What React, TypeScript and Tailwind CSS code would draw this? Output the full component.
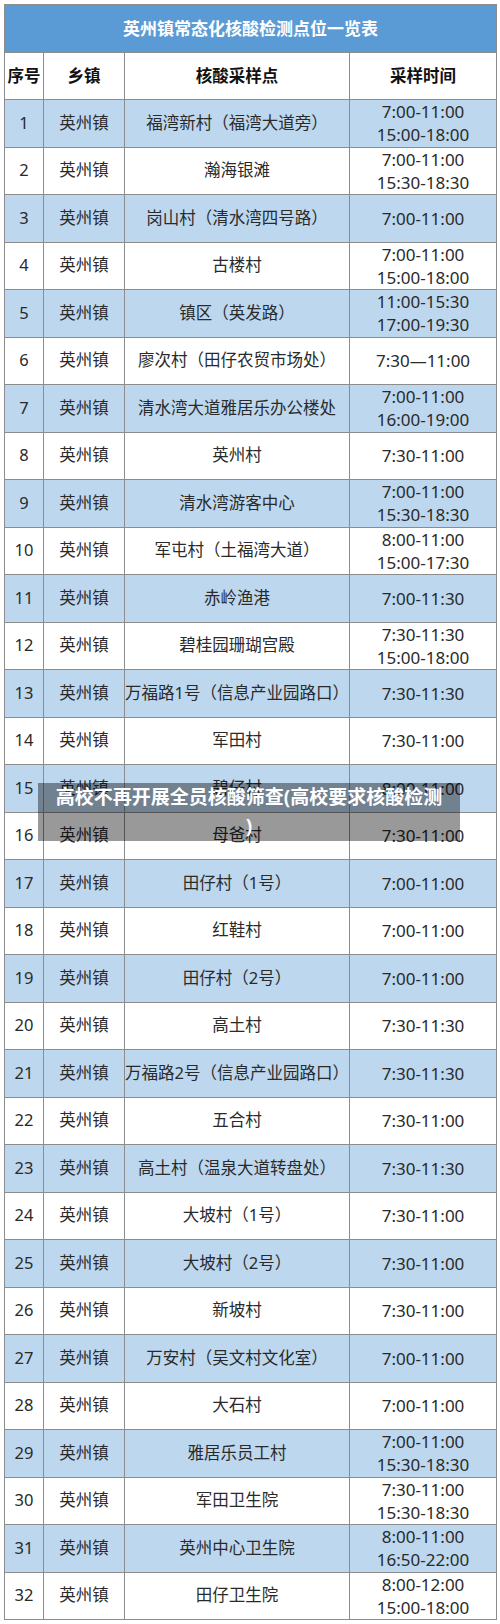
const rows: [string, string[]][] = [
  ['福湾新村（福湾大道旁）', ['7:00-11:00', '15:00-18:00']],
  ['瀚海银滩', ['7:00-11:00', '15:30-18:30']],
  ['岗山村（清水湾四号路）', ['7:00-11:00']],
  ['古楼村', ['7:00-11:00', '15:00-18:00']],
  ['镇区（英发路）', ['11:00-15:30', '17:00-19:30']],
  ['廖次村（田仔农贸市场处）', ['7:30—11:00']],
  ['清水湾大道雅居乐办公楼处', ['7:00-11:00', '16:00-19:00']],
  ['英州村', ['7:30-11:00']],
  ['清水湾游客中心', ['7:00-11:00', '15:30-18:30']],
  ['军屯村（土福湾大道）', ['8:00-11:00', '15:00-17:30']],
  ['赤岭渔港', ['7:00-11:30']],
  ['碧桂园珊瑚宫殿', ['7:30-11:30', '15:00-18:00']],
  ['万福路1号（信息产业园路口）', ['7:30-11:30']],
  ['军田村', ['7:30-11:00']],
  ['碧仔村', ['8:00-11:00']],
  ['母爸村', ['7:30-11:00']],
  ['田仔村（1号）', ['7:00-11:00']],
  ['红鞋村', ['7:00-11:00']],
  ['田仔村（2号）', ['7:00-11:00']],
  ['高土村', ['7:30-11:30']],
  ['万福路2号（信息产业园路口）', ['7:30-11:30']],
  ['五合村', ['7:30-11:00']],
  ['高土村（温泉大道转盘处）', ['7:30-11:30']],
  ['大坡村（1号）', ['7:30-11:00']],
  ['大坡村（2号）', ['7:30-11:00']],
  ['新坡村', ['7:30-11:00']],
  ['万安村（吴文村文化室）', ['7:00-11:00']],
  ['大石村', ['7:00-11:00']],
  ['雅居乐员工村', ['7:00-11:00', '15:30-18:30']],
  ['军田卫生院', ['7:30-11:00', '15:30-18:30']],
  ['英州中心卫生院', ['8:00-11:00', '16:50-22:00']],
  ['田仔卫生院', ['8:00-12:00', '15:00-18:00']],
]

export default function App() {
  return (
    <div
      className="relative w-[500px] h-[1624px] bg-white pt-[4px] pl-[4px]"
      style={{ fontFamily: '"Noto Sans", "Noto Sans CJK SC", sans-serif' }}
    >
      <table className="w-[492px] table-fixed border-collapse text-center text-[#2a2a2a]">
        <colgroup>
          <col className="w-[39px]" />
          <col className="w-[81px]" />
          <col className="w-[225px]" />
          <col className="w-[147px]" />
        </colgroup>
        <tbody>
          <tr className="h-[48px]">
            <td colSpan={4} className="border border-[#8c8c8c] bg-[#5b9bd5] text-[17px] font-bold text-white">
              英州镇常态化核酸检测点位一览表
            </td>
          </tr>
          <tr className="h-[47px] text-[16.5px] font-bold text-[#111]">
            <td className="border border-[#8c8c8c]">序号</td>
            <td className="border border-[#8c8c8c]">乡镇</td>
            <td className="border border-[#8c8c8c]">核酸采样点</td>
            <td className="border border-[#8c8c8c]">采样时间</td>
          </tr>
          {rows.map(([place, times], i) => (
            <tr key={i} className={`h-[47.5px] text-[16.5px] ${i % 2 === 0 ? 'bg-[#bdd7ee]' : 'bg-white'}`}>
              <td className="border border-[#8c8c8c]">{i + 1}</td>
              <td className="border border-[#8c8c8c]">英州镇</td>
              <td className="border border-[#8c8c8c] whitespace-nowrap">{place}</td>
              <td className="border border-[#8c8c8c] text-[17px] leading-[23px]">
                {times.map((t) => (
                  <div key={t}>{t}</div>
                ))}
              </td>
            </tr>
          ))}
        </tbody>
      </table>

      {/* caption overlay */}
      <div className="absolute left-[38px] top-[783px] flex h-[58px] w-[422px] flex-col items-center justify-center bg-black/40 text-[19px] font-bold leading-[29px] text-white">
        <span>高校不再开展全员核酸筛查(高校要求核酸检测</span>
        <span>)</span>
      </div>
    </div>
  )
}
